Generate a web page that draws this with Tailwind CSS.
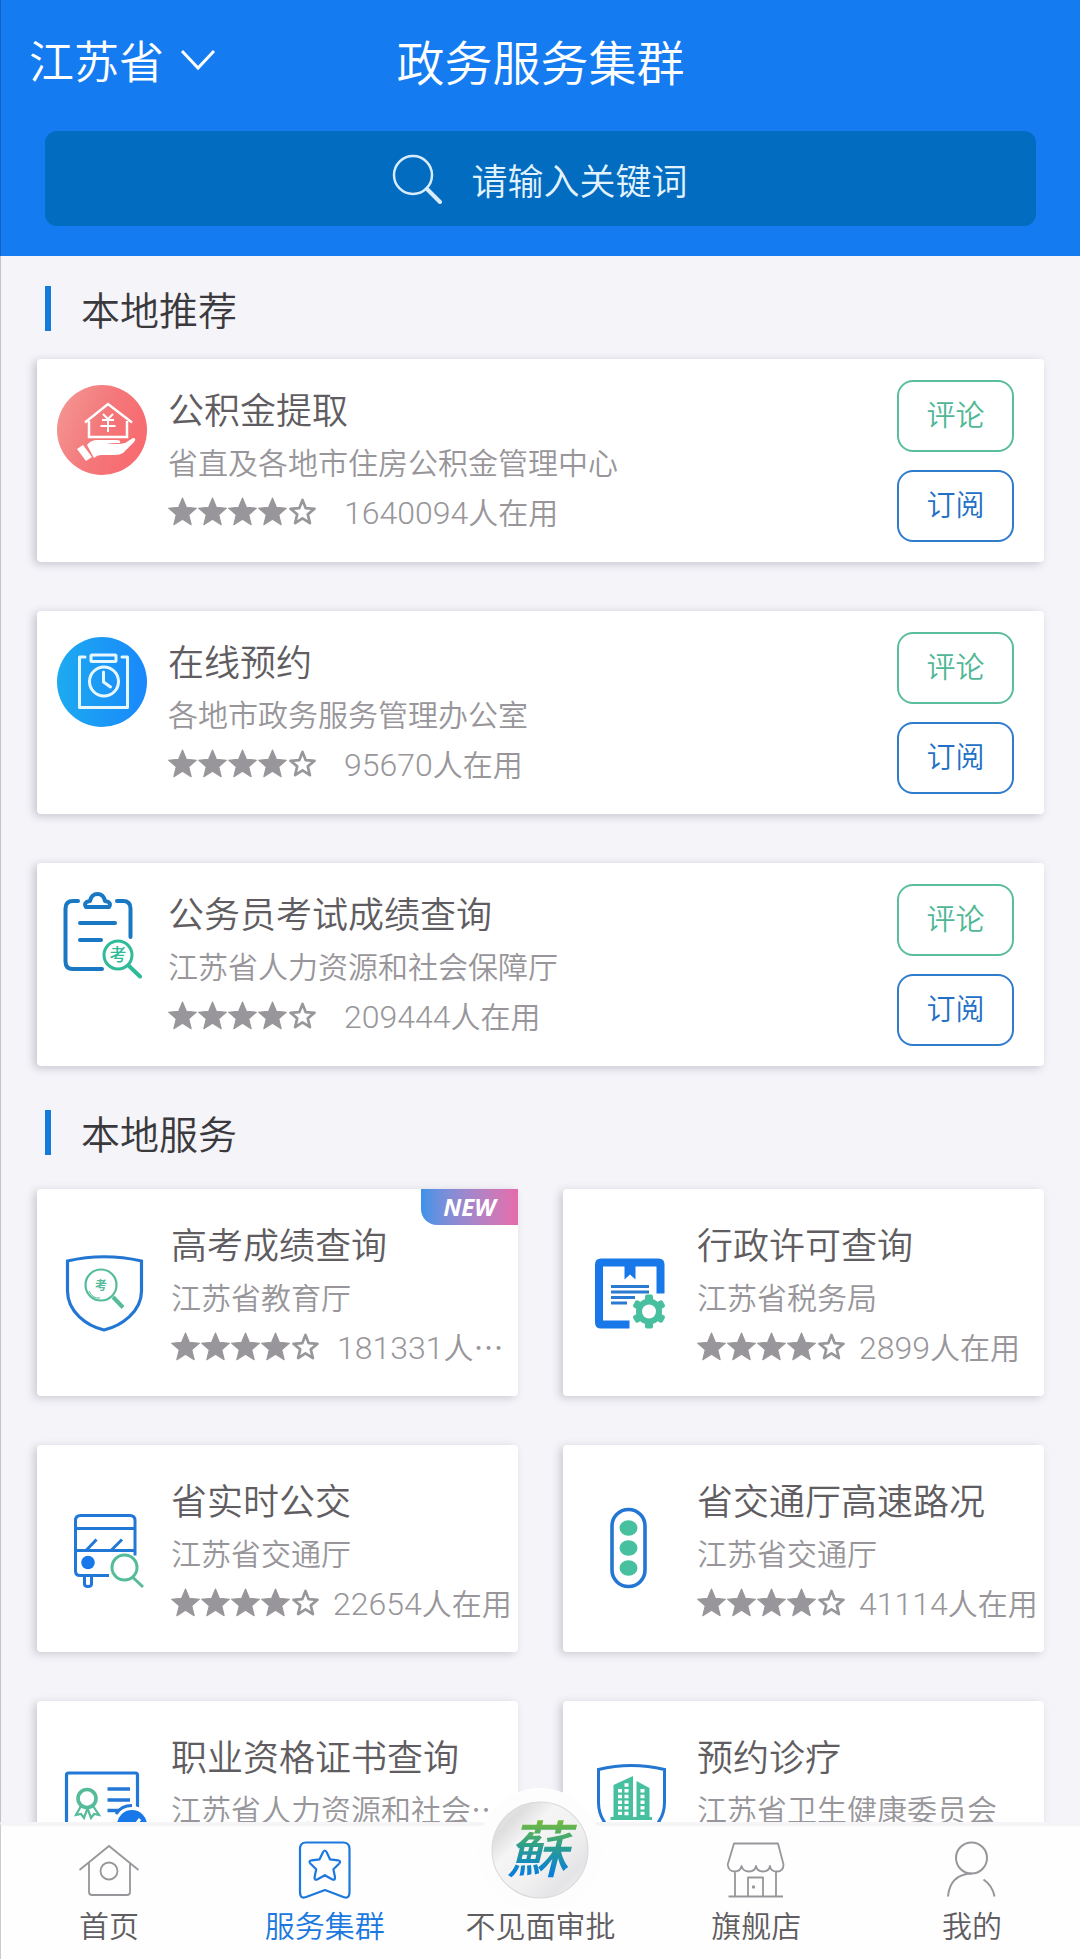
<!DOCTYPE html>
<html lang="zh-CN">
<head>
<meta charset="utf-8">
<meta name="viewport" content="width=device-width, initial-scale=1">
<title>政务服务集群</title>
<script src="https://cdn.jsdelivr.net/npm/@tailwindcss/browser@4"></script>
</head>
<body class="flex h-screen flex-col overflow-hidden bg-[#f5f4f9] font-['Noto_Sans_CJK_SC',sans-serif] font-[350] text-[#5f5d61]">

<svg class="hidden" aria-hidden="true">
  <symbol id="star" viewBox="1.500 1.500 27 27"><path d="M15 2.500l3.600 8.600 9.400.8-7.200 6.100 2.300 9.300L15 22.300l-8.100 5 2.300-9.300L2 11.900l9.400-.8z" fill="#98969a" stroke="#98969a" stroke-width="1" stroke-linejoin="round"/></symbol>
  <symbol id="star-empty" viewBox="1.500 1.500 27 27"><path d="M15 4.200l3 7.700 8.200.6-6.300 5.200 2 8.100-6.900-4.400-6.900 4.400 2-8.100-6.300-5.200 8.200-.6z" fill="none" stroke="#98969a" stroke-width="2.500" stroke-linejoin="round"/></symbol>
  <symbol id="rating" viewBox="0 0 150 30">
    <use href="#star" x="0" width="29" height="29"/><use href="#star" x="30" width="29" height="29"/><use href="#star" x="60" width="29" height="29"/><use href="#star" x="90" width="29" height="29"/><use href="#star-empty" x="120" width="29" height="29"/>
  </symbol>
</svg>

<header class="shrink-0 border-l border-black/20 bg-[#147bf1] px-11 pb-[30px] text-white">
  <div class="-mx-4 mb-[11px] grid h-[120px] grid-cols-[1fr_auto_1fr] items-center">
    <button type="button" class="flex items-center gap-4 text-[45px] leading-[60px]">江苏省
      <svg class="h-6 w-9" viewBox="0 0 36 24" fill="none" stroke="currentColor" stroke-width="3"><path d="M2 3l16 17L34 3"/></svg>
    </button>
    <h1 class="text-[48px] leading-[60px]">政务服务集群</h1>
  </div>
  <label class="flex h-[95px] items-center justify-center gap-[30px] rounded-xl bg-[#026cc0]">
    <svg class="size-[50px]" viewBox="0 0 50 50" fill="none" stroke="#d8ecfb" stroke-linecap="round"><circle cx="21" cy="21" r="19" stroke-width="2.500"/><path d="M35 35l13 13" stroke-width="4"/></svg>
    <input type="text" aria-label="搜索" placeholder="请输入关键词" class="w-[218px] bg-transparent text-[36px] leading-[54px] outline-none placeholder:text-[#e3f3fd]">
  </label>
</header>

<main class="min-h-0 flex-1 overflow-y-auto border-l border-black/20 px-9 [scrollbar-width:none]">
  <section>
    <h2 class="mt-[30px] mb-7 ml-2 flex h-[45px] items-center gap-[30px] text-[39px] text-[#3a393d]"><span class="h-full w-1.5 bg-[#147bd8]"></span>本地推荐</h2>
    <div class="flex flex-col gap-[49px]">

      <article class="flex h-[203px] rounded-sm bg-white pl-5 pr-[30px] shadow-[-3px_2px_8px_rgba(60,50,70,0.25)]">
        <svg class="mt-[26px] mr-[21px] size-[90px] shrink-0" viewBox="0 0 90 90">
          <defs><linearGradient id="red" x1="0" x2="1" y2=".4"><stop stop-color="#f39a95"/><stop offset=".6" stop-color="#f4777a"/><stop offset="1" stop-color="#f76c70"/></linearGradient></defs>
          <circle cx="45" cy="45" r="45" fill="url(#red)"/>
          <g fill="none" stroke="#fff" stroke-width="2.500"><path d="M28 37.500L51 19l24 18.500M32 36v16h38V36"/><path d="M46 29l5 5 5-5M45 35h12M43.500 41h15M51 34v13" stroke-width="2"/></g>
          <path d="M30 60q4-5 10-5h20q4 0 3 3H49q12 2 19 0l8-5q4 0 1 4L66 68q-3 2-8 2H44q-4 0-7 3z" fill="#fff"/><path d="M20 64l6-4 9 12-6 4z" fill="#fff"/>
        </svg>
        <div class="min-w-0 flex-1 pt-[23px]">
          <h3 class="truncate text-[36px] leading-[52px]">公积金提取</h3>
          <p class="truncate text-[30px] leading-[54px] text-[#98969a]">省直及各地市住房公积金管理中心</p>
          <div class="flex h-12 items-center gap-[26px] text-[30px] text-[#98969a]"><svg class="h-[30px] w-[150px] shrink-0" role="img" aria-label="四星"><use href="#rating"/></svg><p class="min-w-0 truncate leading-[46px]"><span class="font-[Roboto] text-[32px]">1640094</span>人在用</p></div>
        </div>
        <div class="flex shrink-0 flex-col justify-center gap-[18px]">
          <button type="button" class="h-[72px] w-[117px] rounded-2xl border-2 border-[#5cbd9e] pb-1 text-[29px] text-[#4fb796]">评论</button>
          <button type="button" class="h-[72px] w-[117px] rounded-2xl border-2 border-[#2f7ccd] pb-1 text-[29px] text-[#226fc6]">订阅</button>
        </div>
      </article>

      <article class="flex h-[203px] rounded-sm bg-white pl-5 pr-[30px] shadow-[-3px_2px_8px_rgba(60,50,70,0.25)]">
        <svg class="mt-[26px] mr-[21px] size-[90px] shrink-0" viewBox="0 0 90 90">
          <defs><linearGradient id="blue" x1="0" x2="1"><stop stop-color="#1daaf0"/><stop offset="1" stop-color="#1988fb"/></linearGradient></defs>
          <circle cx="45" cy="45" r="45" fill="url(#blue)"/>
          <g fill="none" stroke="#e6f7ff" stroke-width="3" stroke-linejoin="round" stroke-linecap="round"><path d="M28 20h-5.500v50.500h48V20H65"/><rect x="34" y="18" width="25" height="6.500" rx="1"/><circle cx="47" cy="44.500" r="14.500"/><path d="M46.500 35v10l7 5"/></g>
        </svg>
        <div class="min-w-0 flex-1 pt-[23px]">
          <h3 class="truncate text-[36px] leading-[52px]">在线预约</h3>
          <p class="truncate text-[30px] leading-[54px] text-[#98969a]">各地市政务服务管理办公室</p>
          <div class="flex h-12 items-center gap-[26px] text-[30px] text-[#98969a]"><svg class="h-[30px] w-[150px] shrink-0" role="img" aria-label="四星"><use href="#rating"/></svg><p class="min-w-0 truncate leading-[46px]"><span class="font-[Roboto] text-[32px]">95670</span>人在用</p></div>
        </div>
        <div class="flex shrink-0 flex-col justify-center gap-[18px]">
          <button type="button" class="h-[72px] w-[117px] rounded-2xl border-2 border-[#5cbd9e] pb-1 text-[29px] text-[#4fb796]">评论</button>
          <button type="button" class="h-[72px] w-[117px] rounded-2xl border-2 border-[#2f7ccd] pb-1 text-[29px] text-[#226fc6]">订阅</button>
        </div>
      </article>

      <article class="flex h-[203px] rounded-sm bg-white pl-5 pr-[30px] shadow-[-3px_2px_8px_rgba(60,50,70,0.25)]">
        <svg class="mt-[26px] mr-[21px] size-[90px] shrink-0" viewBox="0 0 90 90" fill="none" stroke-linecap="round" stroke-linejoin="round">
          <g stroke="#1878c4" stroke-width="4"><path d="M21 12h-5q-7.500 0-7.500 7.500v53q0 7.500 7.500 7.500h29M60 12h6q7.500 0 7.500 7.500V48M23 34h35M23 51h21"/><path d="M29 18q-3-5 4-6 1.500-7 7.500-7t7.500 7q7 1 4 6z"/></g>
          <g stroke="#2fbb98"><circle cx="61" cy="66" r="14" stroke-width="3"/><path d="M72 77l11 10.500" stroke-width="4"/></g>
          <text x="61" y="72" text-anchor="middle" font-size="17" font-weight="500" fill="#2fbb98">考</text>
        </svg>
        <div class="min-w-0 flex-1 pt-[23px]">
          <h3 class="truncate text-[36px] leading-[52px]">公务员考试成绩查询</h3>
          <p class="truncate text-[30px] leading-[54px] text-[#98969a]">江苏省人力资源和社会保障厅</p>
          <div class="flex h-12 items-center gap-[26px] text-[30px] text-[#98969a]"><svg class="h-[30px] w-[150px] shrink-0" role="img" aria-label="四星"><use href="#rating"/></svg><p class="min-w-0 truncate leading-[46px]"><span class="font-[Roboto] text-[32px]">209444</span>人在用</p></div>
        </div>
        <div class="flex shrink-0 flex-col justify-center gap-[18px]">
          <button type="button" class="h-[72px] w-[117px] rounded-2xl border-2 border-[#5cbd9e] pb-1 text-[29px] text-[#4fb796]">评论</button>
          <button type="button" class="h-[72px] w-[117px] rounded-2xl border-2 border-[#2f7ccd] pb-1 text-[29px] text-[#226fc6]">订阅</button>
        </div>
      </article>
    </div>
  </section>

  <section class="pb-12">
    <h2 class="mt-[44px] mb-[34px] ml-2 flex h-[45px] items-center gap-[30px] text-[39px] text-[#3a393d]"><span class="h-full w-1.5 bg-[#147bd8]"></span>本地服务</h2>
    <div class="grid grid-cols-2 gap-x-[45px] gap-y-[49px]">

      <article class="relative flex h-[207px] rounded-sm bg-white pr-1 shadow-[-3px_2px_8px_rgba(60,50,70,0.22)]">
        <span class="absolute top-0 right-0 flex h-9 w-[97px] items-center justify-center rounded-bl-2xl bg-linear-to-r from-[#3b93e8] to-[#e66bab] font-['Open_Sans',sans-serif] text-[24px] font-bold text-white italic">NEW</span>
        <div class="flex w-[134px] shrink-0 items-center justify-center">
          <svg class="size-[90px]" viewBox="0 0 90 90" fill="none">
            <path d="M8.500 13Q45 4.500 82.500 13v30C82.500 64 62 78 45 82 28 78 8.500 64 8.500 43z" stroke="#2377d3" stroke-width="3.200"/>
            <g stroke="#55bb9a"><circle cx="42" cy="37" r="15.500" stroke-width="2.200"/><path d="M30 43q4 8 11 7" stroke-width="1"/><path d="M54 49l10 10.500" stroke-width="4"/></g>
            <text x="42" y="41.500" text-anchor="middle" font-size="12" font-weight="700" fill="#55bb9a">考</text>
          </svg>
        </div>
        <div class="min-w-0 flex-1 pt-[28px]">
          <h3 class="truncate text-[36px] leading-[52px]">高考成绩查询</h3>
          <p class="truncate text-[30px] leading-[54px] text-[#98969a]">江苏省教育厅</p>
          <div class="flex h-12 items-center gap-4 text-[30px] text-[#98969a]"><svg class="h-[30px] w-[150px] shrink-0" role="img" aria-label="四星"><use href="#rating"/></svg><p class="min-w-0 truncate leading-[46px]"><span class="font-[Roboto] text-[32px]">181331</span>人在用</p></div>
        </div>
      </article>

      <article class="flex h-[207px] rounded-sm bg-white pr-1 shadow-[-3px_2px_8px_rgba(60,50,70,0.22)]">
        <div class="flex w-[134px] shrink-0 items-center justify-center">
          <svg class="size-[90px]" viewBox="0 0 90 90" fill="none">
            <path d="M44.500 76.500H16q-2 0-2-2v-58q0-2 2-2h57.500q2 0 2 2v29" stroke="#1878ea" stroke-width="8"/>
            <path d="M39.500 14h11v17.500l-5.500-5-5.500 5z" fill="#1878ea"/>
            <path d="M26 38.500h38M26 44h38M26 49.500h24M26 55h16" stroke="#2a7ad2" stroke-width="2.800"/>
            <g fill="#48bf9f"><circle cx="64" cy="63.500" r="13"/><rect x="60" y="46.500" width="8" height="34" rx="2"/><rect x="60" y="46.500" width="8" height="34" rx="2" transform="rotate(60 64 63.500)"/><rect x="60" y="46.500" width="8" height="34" rx="2" transform="rotate(120 64 63.500)"/></g>
            <circle cx="64" cy="63.500" r="7" fill="#fff"/>
          </svg>
        </div>
        <div class="min-w-0 flex-1 pt-[28px]">
          <h3 class="truncate text-[36px] leading-[52px]">行政许可查询</h3>
          <p class="truncate text-[30px] leading-[54px] text-[#98969a]">江苏省税务局</p>
          <div class="flex h-12 items-center gap-3 text-[30px] text-[#98969a]"><svg class="h-[30px] w-[150px] shrink-0" role="img" aria-label="四星"><use href="#rating"/></svg><p class="min-w-0 truncate leading-[46px]"><span class="font-[Roboto] text-[32px]">2899</span>人在用</p></div>
        </div>
      </article>

      <article class="flex h-[207px] rounded-sm bg-white pr-1 shadow-[-3px_2px_8px_rgba(60,50,70,0.22)]">
        <div class="flex w-[134px] shrink-0 items-center justify-center">
          <svg class="size-[90px]" viewBox="0 0 90 90" fill="none">
            <g stroke="#2278d6" stroke-width="3"><path d="M50 71.500H21q-4.500 0-4.500-4.500V16.500q0-5 5-5H71q5 0 5 5v35M16.500 24.500H76M16.500 46.500H76M27.500 46l10-10.500M52.500 46l10.500-10.500M25.500 71.500V80q0 2.500 3.500 2.500t3.500-2.500v-8.500"/></g>
            <circle cx="29" cy="58.500" r="6.800" fill="#1878ea"/>
            <g stroke="#55bb9a" stroke-width="3"><circle cx="65.500" cy="63.500" r="12.500"/><path d="M74 73.500l10 9.500"/></g>
          </svg>
        </div>
        <div class="min-w-0 flex-1 pt-[28px]">
          <h3 class="truncate text-[36px] leading-[52px]">省实时公交</h3>
          <p class="truncate text-[30px] leading-[54px] text-[#98969a]">江苏省交通厅</p>
          <div class="flex h-12 items-center gap-3 text-[30px] text-[#98969a]"><svg class="h-[30px] w-[150px] shrink-0" role="img" aria-label="四星"><use href="#rating"/></svg><p class="min-w-0 truncate leading-[46px]"><span class="font-[Roboto] text-[32px]">22654</span>人在用</p></div>
        </div>
      </article>

      <article class="flex h-[207px] rounded-sm bg-white pr-1 shadow-[-3px_2px_8px_rgba(60,50,70,0.22)]">
        <div class="flex w-[134px] shrink-0 items-center justify-center">
          <svg class="size-[90px]" viewBox="0 0 90 90">
            <rect x="27" y="5.500" width="33" height="77" rx="16.500" fill="none" stroke="#2476d4" stroke-width="3.600"/>
            <g fill="#46c09f"><ellipse cx="43.500" cy="24" rx="9" ry="7.800"/><ellipse cx="43.500" cy="44" rx="9" ry="7.800"/><ellipse cx="43.500" cy="64" rx="9" ry="7.800"/></g>
          </svg>
        </div>
        <div class="min-w-0 flex-1 pt-[28px]">
          <h3 class="truncate text-[36px] leading-[52px]">省交通厅高速路况</h3>
          <p class="truncate text-[30px] leading-[54px] text-[#98969a]">江苏省交通厅</p>
          <div class="flex h-12 items-center gap-3 text-[30px] text-[#98969a]"><svg class="h-[30px] w-[150px] shrink-0" role="img" aria-label="四星"><use href="#rating"/></svg><p class="min-w-0 truncate leading-[46px]"><span class="font-[Roboto] text-[32px]">41114</span>人在用</p></div>
        </div>
      </article>

      <article class="flex h-[207px] rounded-sm bg-white pr-1 shadow-[-3px_2px_8px_rgba(60,50,70,0.22)]">
        <div class="flex w-[134px] shrink-0 items-center justify-center">
          <svg class="size-[90px]" viewBox="0 0 90 90" fill="none">
            <rect x="7.500" y="13" width="71" height="58" rx="2" stroke="#2278d6" stroke-width="3.200"/>
            <path d="M48.500 29H71M48.500 40H71M48.500 50.500H62" stroke="#2278d6" stroke-width="3.500"/>
            <g stroke="#55bb9a" stroke-width="3"><circle cx="28" cy="38.500" r="9" stroke-width="3.600"/><path d="M22 46l-5 9 5-1 3 4 4-11M34 46l6 9-5-1-3 4-4-11" stroke-width="2.200"/></g>
            <circle cx="73" cy="64" r="18" fill="#fff"/><path d="M57 54q5-8.500 16-8.500" stroke="#2278d6" stroke-width="3"/><circle cx="73" cy="65" r="15" fill="#1878ea"/><path d="M66 65l6 6 9-12" stroke="#fff" stroke-width="3"/>
          </svg>
        </div>
        <div class="min-w-0 flex-1 pt-[28px]">
          <h3 class="truncate text-[36px] leading-[52px]">职业资格证书查询</h3>
          <p class="truncate text-[30px] leading-[54px] text-[#98969a]">江苏省人力资源和社会保障厅</p>
        </div>
      </article>

      <article class="flex h-[207px] rounded-sm bg-white pr-1 shadow-[-3px_2px_8px_rgba(60,50,70,0.22)]">
        <div class="flex w-[134px] shrink-0 items-center justify-center">
          <svg class="size-[90px]" viewBox="0 0 90 90" fill="none">
            <path d="M13.500 9.500Q46 1.500 79.500 9.500v33C79.500 62 64 76 46.500 81 29 76 13.500 62 13.500 42.500z" stroke="#2377d3" stroke-width="3"/>
            <path d="M28.500 57V25L48 16v41zM51.500 57V21l13 7v29zM25.500 57H67v3H25.500z" fill="#46c09f"/>
            <g stroke="#fff" stroke-width="4" stroke-dasharray="3.500 2.200"><path d="M35 29v26M41.500 23.300v32M57.500 29v26"/></g>
          </svg>
        </div>
        <div class="min-w-0 flex-1 pt-[28px]">
          <h3 class="truncate text-[36px] leading-[52px]">预约诊疗</h3>
          <p class="truncate text-[30px] leading-[54px] text-[#98969a]">江苏省卫生健康委员会</p>
        </div>
      </article>
    </div>
  </section>
</main>

<nav class="relative grid shrink-0 grid-cols-5 border-t-4 border-l border-t-[#f5f4f7] border-l-black/20 bg-[#fefefe] pt-3 pb-[13px] text-center text-[30px] leading-[44px]">
  <a href="#" class="flex flex-col items-center">
    <svg class="size-16" viewBox="0 0 64 64" fill="none" stroke="#98969a" stroke-width="1.800"><path d="M2.500 32L32 8l29.500 24M12 25v29q0 3 3 3h35q3 0 3-3V25"/><circle cx="32" cy="33" r="8.500"/></svg>
    首页</a>
  <a href="#" aria-current="page" class="flex flex-col items-center text-[#1b78de]">
    <svg class="size-16" viewBox="0 0 64 64" fill="none" stroke="#1b78de" stroke-width="2.200" stroke-linejoin="round"><path d="M13 4.500h37q6.500 0 6.500 6.500v43q0 8-7.500 4.500L32 52l-17.500 6.500Q7 62 7 54V11q0-6.500 6-6.500z"/><path d="M29.800 14.500q2-4 4 0l3.200 6.800 8 1q3.600.8 1 3.500l-5.600 5.400 1.600 8q.4 3.600-3 2l-7.200-4-7.200 4q-3.400 1.600-3-2l1.600-8-5.600-5.400q-2.600-2.700 1-3.500l8-1z"/></svg>
    服务集群</a>
  <a href="#" class="relative flex flex-col items-center pt-16">
    <span class="absolute -top-[50px] flex size-[124px] items-center justify-center rounded-full bg-[#fdfdfe]">
      <svg class="size-[98px]" viewBox="0 0 96 96">
        <defs>
          <linearGradient id="disc" x1="0" x2="1" y2="1"><stop stop-color="#ededee"/><stop offset=".2" stop-color="#dededf"/><stop offset=".35" stop-color="#f5f5f6"/><stop offset=".6" stop-color="#f0f0f1"/><stop offset=".8" stop-color="#e4e4e6"/><stop offset="1" stop-color="#fafafa"/></linearGradient>
          <linearGradient id="ink" x1="0" x2="0" y2="1"><stop offset=".15" stop-color="#86c22a"/><stop offset=".5" stop-color="#2d9f8c"/><stop offset=".8" stop-color="#0a7fd6"/></linearGradient>
        </defs>
        <circle cx="48" cy="48" r="47" fill="url(#disc)" stroke="#d9d9dc"/>
        <text x="46" y="70" text-anchor="middle" font-size="60" font-weight="500" font-style="italic" fill="url(#ink)">蘇</text>
      </svg>
    </span>
    不见面审批</a>
  <a href="#" class="flex flex-col items-center">
    <svg class="size-16" viewBox="0 0 64 64" fill="none" stroke="#98969a" stroke-width="1.800" stroke-linejoin="round"><path d="M10 5.500h44l5.500 21q0 7-6.500 7t-7-5.500q-1 5.500-7 5.500T32 28q-1 5.500-7 5.500T17.500 28q-1 5.500-7 5.500t-6.800-7zM11 34v24.500M52 34v24.500M4.500 58.500H59M24 58.500v-19h15v19"/><circle cx="29.500" cy="49" r=".8"/></svg>
    旗舰店</a>
  <a href="#" class="flex flex-col items-center">
    <svg class="size-16" viewBox="0 0 64 64" fill="none" stroke="#98969a" stroke-width="2"><circle cx="31.500" cy="20" r="15.500"/><path d="M8 58.500q2-22 23.500-23M43.500 41.500q9 6 11 17"/></svg>
    我的</a>
</nav>
</body>
</html>
